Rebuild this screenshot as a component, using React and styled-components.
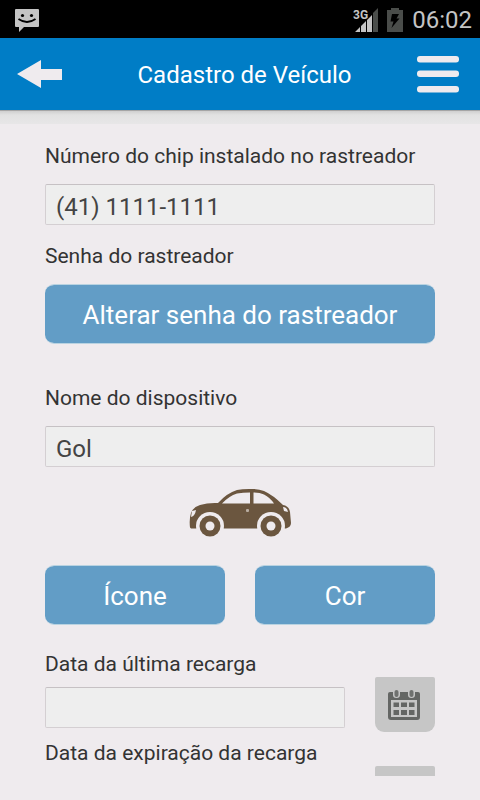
import styled, { createGlobalStyle } from 'styled-components';
import { useState } from 'react';

const recharges = [
    { id: 'ultima-recarga', title: 'Data da última recarga' },
    { id: 'expiracao-recarga', title: 'Data da expiração da recarga' },
]

const MessageIcon = () => (
    <svg width="24" height="23" viewBox="0 0 24 23" aria-hidden="true">
        <path d="M1 0H23Q24 0 24 1V17Q24 18 23 18H9L4 23V18H1Q0 18 0 17V1Q0 0 1 0Z" fill="#c4c4c4" />
        <circle cx="7.5" cy="6.5" r="1.6" fill="#000" />
        <circle cx="16.5" cy="6.5" r="1.6" fill="#000" />
        <path d="M3.5 10Q12 16 20.5 10" fill="none" stroke="#000" strokeWidth="1.8" />
    </svg>
)

const SignalIcon = () => (
    <svg width="25" height="25" viewBox="0 0 25 25" aria-hidden="true">
        <path d="M20 5L25 0V24H20Z" fill="#4a4d4a" />
        <path d="M2 24L7 19V24ZM8 18L13 13V24H8ZM14 12L19 7V24H14Z" fill="#c4c4c4" />
        <text x="0" y="11" fontFamily="Roboto, sans-serif" fontSize="12" fontWeight="700" fill="#c4c4c4">3G</text>
    </svg>
)

const BatteryIcon = () => (
    <svg width="16" height="24" viewBox="0 0 16 24" aria-hidden="true">
        <path d="M4 0H12V2H16V24H0V2H4Z" fill="#4a4d4a" />
        <path d="M5 6H12L9.500 10.500H12.500L4.500 20L6.500 13.500H3.500Z" fill="#000" />
    </svg>
)

const ArrowIcon = () => (
    <svg width="45" height="28" viewBox="0 0 45 28" aria-hidden="true">
        <path d="M0 14L24 0V9H45V20H24V28Z" fill="#efebee" />
    </svg>
)

const MenuIcon = () => (
    <svg width="42" height="38" viewBox="0 0 42 38" aria-hidden="true">
        <rect y="1" width="42" height="6.500" rx="3" fill="#efebee" />
        <rect y="15.500" width="42" height="6.500" rx="3" fill="#efebee" />
        <rect y="31" width="42" height="6.500" rx="3" fill="#efebee" />
    </svg>
)

const CarIcon = () => (
    <svg width="104" height="49" viewBox="0 0 104 49" role="img" aria-label="Carro">
        <path
            d="M2 39.500Q1 31 3 25Q5 19 12 17Q20 14.500 30 15Q39 5 49 2Q54 1 61 1Q70 0.500 76 3Q85 7 95 17Q101 18 102 24L103 35Q103 39 98 40.500H3Z"
            fill="#6b563f"
        />
        <path d="M34 15.500Q41 8 49 5.500Q55 4.500 62 4.500V15.500ZM65.500 4.500Q72 4.500 76 6.500Q82 9.500 86 15.500H65.500Z" fill="#efebee" />
        <path d="M4 23L8 22Q7 28 3 29ZM95 19Q99 19 100 24L96 23Z" fill="#efebee" />
        <rect x="58" y="21" width="3" height="3" rx="1" fill="#b8aca0" />
        <circle cx="22" cy="38" r="14" fill="#efebee" />
        <circle cx="83" cy="38" r="14" fill="#efebee" />
        <circle cx="22" cy="38" r="10.500" fill="#6b563f" />
        <circle cx="83" cy="38" r="10.500" fill="#6b563f" />
        <circle cx="22" cy="38" r="4.500" fill="#efebee" />
        <circle cx="83" cy="38" r="4.500" fill="#efebee" />
    </svg>
)

const CalendarIcon = () => (
    <svg width="34" height="32" viewBox="0 0 34 32" aria-hidden="true">
        <path d="M3 3H31Q33 3 33 5V28Q33 31 30 31H4Q1 31 1 28V5Q1 3 3 3Z" fill="#646664" />
        <path d="M4 11H30V28H4Z" fill="#c6c6c6" />
        <path d="M6.500 13.500H12V18H6.500ZM14 13.500H20V18H14ZM22 13.500H27.500V18H22ZM6.500 21H12V26H6.500ZM14 21H20V26H14ZM22 21H27.500V26H22Z" fill="#646664" />
        <path d="M6 1H13V6Q13 9 9.500 9Q6 9 6 6ZM21 1H28V6Q28 9 24.500 9Q21 9 21 6Z" fill="#c6c6c6" />
        <rect x="7.500" y="1" width="4" height="7" rx="2" fill="#6f716f" />
        <rect x="22.500" y="1" width="4" height="7" rx="2" fill="#6f716f" />
    </svg>
)

function App() {
    const [chip, setChip] = useState('(41) 1111-1111');
    const [name, setName] = useState('Gol');
    const [dates, setDates] = useState({});

    return (
        <Screen>
            <GlobalStyle />
            <StatusBar>
                <MessageIcon />
                <StatusIcons>
                    <SignalIcon />
                    <BatteryIcon />
                    <Clock>06:02</Clock>
                </StatusIcons>
            </StatusBar>
            <Header>
                <IconButton type="button" aria-label="Voltar"><ArrowIcon /></IconButton>
                <Title>Cadastro de Veículo</Title>
                <IconButton type="button" aria-label="Menu"><MenuIcon /></IconButton>
            </Header>
            <Shadow />
            <Form>
                <Group>
                    <Label htmlFor="chip">Número do chip instalado no rastreador</Label>
                    <Input id="chip" value={chip} onChange={(e) => setChip(e.target.value)} />
                </Group>
                <Group $space={42}>
                    <Label as="span">Senha do rastreador</Label>
                    <Button type="button">Alterar senha do rastreador</Button>
                </Group>
                <Group $space={21}>
                    <Label htmlFor="nome">Nome do dispositivo</Label>
                    <Input id="nome" value={name} onChange={(e) => setName(e.target.value)} />
                </Group>
                <Vehicle><CarIcon /></Vehicle>
                <ButtonRow>
                    <Button type="button">Ícone</Button>
                    <Button type="button">Cor</Button>
                </ButtonRow>
                {recharges.map((item) => (
                    <DateRow key={item.id}>
                        <DateField>
                            <Label htmlFor={item.id}>{item.title}</Label>
                            <Input
                                id={item.id}
                                value={dates[item.id] || ''}
                                onChange={(e) => setDates({ ...dates, [item.id]: e.target.value })}
                            />
                        </DateField>
                        <CalendarButton type="button" aria-label={item.title}><CalendarIcon /></CalendarButton>
                    </DateRow>
                ))}
            </Form>
        </Screen>
    )
}

const GlobalStyle = createGlobalStyle`
    * {
        box-sizing: border-box;
    }
    body {
        margin: 0;
        background: #efebee;
        color: #333;
        font-family: Roboto, sans-serif;
    }
    button, input {
        font-family: inherit;
    }
`
const Screen = styled.div`
    display: flex;
    flex-direction: column;
    height: 100vh;
    padding-bottom: 24px;
`
const StatusBar = styled.div`
    display: flex;
    flex-shrink: 0;
    align-items: center;
    justify-content: space-between;
    height: 38px;
    padding: 2px 8px 0 15px;
    background: #000;
`
const StatusIcons = styled.div`
    display: flex;
    align-items: center;
    gap: 9px;
`
const Clock = styled.time`
    color: #c4c4c4;
    font-size: 24px;
    line-height: 36px;
`
const Header = styled.header`
    display: flex;
    flex-shrink: 0;
    align-items: center;
    height: 72px;
    padding: 0 21px 0 17px;
    background: #007dc6;
`
const Title = styled.h1`
    flex: 1;
    margin: 0;
    padding: 2px 0 0 10px;
    color: #fff;
    font-size: 24px;
    font-weight: 400;
    line-height: 32px;
    text-align: center;
`
const IconButton = styled.button`
    display: flex;
    padding: 0;
    border: 0;
    background: none;
    cursor: pointer;
`
const Shadow = styled.div`
    flex-shrink: 0;
    height: 14px;
    border-top: 1px solid #a5a5a5;
    background: linear-gradient(#cfcfcf, #e2e2e2 4px, #e7e6e7);
`
const Form = styled.form`
    flex: 1;
    min-height: 0;
    padding: 20px 45px;
    overflow-y: auto;
    scrollbar-width: none;
`
const Group = styled.div`
    display: flex;
    flex-direction: column;
    gap: 16px;
    margin-bottom: ${(props) => props.$space || 19}px;
`
const Label = styled.label`
    font-size: 21px;
    line-height: 24px;
`
const Input = styled.input`
    width: 100%;
    height: 41px;
    padding: 4px 10px 0;
    border: 1px solid #d4cfd2;
    border-top-color: #c6c1c4;
    border-radius: 2px;
    outline: none;
    background: #eee;
    color: #444;
    font-size: 24px;
`
const Button = styled.button`
    flex: 1;
    min-height: 60px;
    padding: 2px 0 0;
    border: 1px solid #b9d3e1;
    border-width: 1px 0;
    border-radius: 9px;
    background: #629dc6;
    background-clip: padding-box;
    color: #fff;
    font-size: 26px;
    cursor: pointer;
`
const Vehicle = styled.div`
    display: flex;
    justify-content: center;
    margin-bottom: 28px;
`
const ButtonRow = styled.div`
    display: flex;
    gap: 30px;
    margin-bottom: 27px;
`
const DateRow = styled.div`
    display: flex;
    align-items: flex-end;
    gap: 30px;
    margin-bottom: 9px;
`
const DateField = styled.div`
    display: flex;
    flex: 1;
    flex-direction: column;
    gap: 11px;
    padding-bottom: 4px;
`
const CalendarButton = styled.button`
    display: flex;
    align-items: center;
    justify-content: center;
    width: 60px;
    height: 55px;
    padding: 0 2px 0 0;
    border: 0;
    border-radius: 2px 2px 9px 9px;
    background: #c6c6c6;
    cursor: pointer;
`

export default App
